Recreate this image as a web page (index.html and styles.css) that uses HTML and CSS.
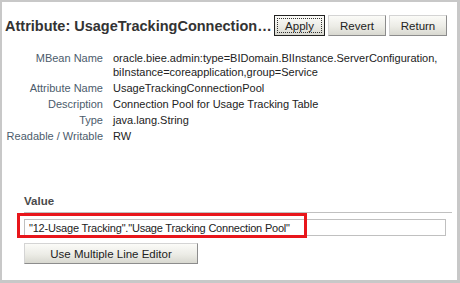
FILE: index.html
```html
<!DOCTYPE html>
<html lang="en">
<head>
    <meta charset="UTF-8">
    <title>Attribute: UsageTrackingConnectionPool</title>
    <link rel="stylesheet" href="styles.css">
</head>
<body>
    <div class="frame">
        <div class="header">
            <h1 class="title">Attribute: UsageTrackingConnectionPool</h1>
            <div class="actions">
                <button class="btn btn-apply">Apply</button>
                <button class="btn btn-revert">Revert</button>
                <button class="btn btn-return">Return</button>
            </div>
        </div>

        <div class="props">
            <div class="prop-label">MBean Name</div>
            <div class="prop-value">oracle.biee.admin:type=BIDomain.BIInstance.ServerConfiguration, biInstance=coreapplication,group=Service</div>

            <div class="prop-label">Attribute Name</div>
            <div class="prop-value">UsageTrackingConnectionPool</div>

            <div class="prop-label">Description</div>
            <div class="prop-value">Connection Pool for Usage Tracking Table</div>

            <div class="prop-label">Type</div>
            <div class="prop-value">java.lang.String</div>

            <div class="prop-label">Readable / Writable</div>
            <div class="prop-value">RW</div>
        </div>

        <div class="value-section">
            <h2 class="section-title">Value</h2>
            <div class="value-field">
                <input type="text" class="value-input" value='"12-Usage Tracking"."Usage Tracking Connection Pool"'>
                <span class="highlight"></span>
            </div>
            <button class="btn btn-wide">Use Multiple Line Editor</button>
        </div>
    </div>
</body>
</html>
```

FILE: styles.css
```css
html, body {
    margin: 0;
    padding: 0;
    background-color: #fff;
}

body {
    font-family: "Liberation Sans", Arial, sans-serif;
    font-size: 11px;
    color: #222;
}

.frame {
    box-sizing: border-box;
    width: 460px;
    height: 283px;
    border-style: solid;
    border-color: #c8c8c8;
    border-width: 2px 3px 3px 2px;
    background-color: #fff;
}

.header {
    display: flex;
    align-items: center;
    padding: 13px 10px 0 3px;
}

.title {
    flex: 1;
    min-width: 0;
    margin: 0;
    font-size: 14.5px;
    font-weight: bold;
    color: #333;
    white-space: nowrap;
    overflow: hidden;
    text-overflow: ellipsis;
}

.actions {
    display: flex;
    gap: 3px;
    margin-left: 1px;
}

.btn {
    box-sizing: border-box;
    font-family: "Liberation Sans", Arial, sans-serif;
    font-size: 11.5px;
    color: #222;
    height: 21px;
    padding: 0;
    border: 1px solid #a0a0a0;
    border-color: #d4d4d4 #8c8c8c #8c8c8c #d4d4d4;
    background: linear-gradient(#fbfbf8, #ecece6 55%, #d8d8d0);
    cursor: pointer;
}

.btn-apply {
    width: 51px;
    border: 1px solid #222;
    outline: 1px dotted #333;
    outline-offset: -4px;
}

.btn-revert {
    width: 58px;
}

.btn-return {
    width: 58px;
}

.props {
    display: grid;
    grid-template-columns: 101px 1fr;
    column-gap: 10px;
    row-gap: 2px;
    margin-top: 15px;
    padding-right: 12px;
    line-height: 14px;
}

.prop-label {
    text-align: right;
    color: #4c5c6c;
    white-space: nowrap;
}

.prop-value {
    color: #222;
}

.value-section {
    margin-top: 51px;
    padding: 0 5px 0 22px;
}

.section-title {
    margin: 0;
    padding-bottom: 4px;
    font-size: 11.5px;
    line-height: 14px;
    font-weight: bold;
    color: #4a4a4a;
    border-bottom: 1px solid #c0c0c0;
}

.value-field {
    position: relative;
    margin-top: 6px;
    padding-right: 6px;
}

.value-input {
    display: block;
    box-sizing: border-box;
    width: 100%;
    height: 17px;
    margin: 0;
    padding: 0 4px;
    border: 1px solid #c0c0c0;
    font-family: "Liberation Sans", Arial, sans-serif;
    font-size: 11px;
    letter-spacing: -0.2px;
    color: #222;
}

.highlight {
    position: absolute;
    left: -7px;
    top: -6px;
    width: 284px;
    height: 19px;
    border: 3px solid #e8161b;
    pointer-events: none;
}

.btn-wide {
    display: block;
    width: 174px;
    margin-top: 7px;
}
```
